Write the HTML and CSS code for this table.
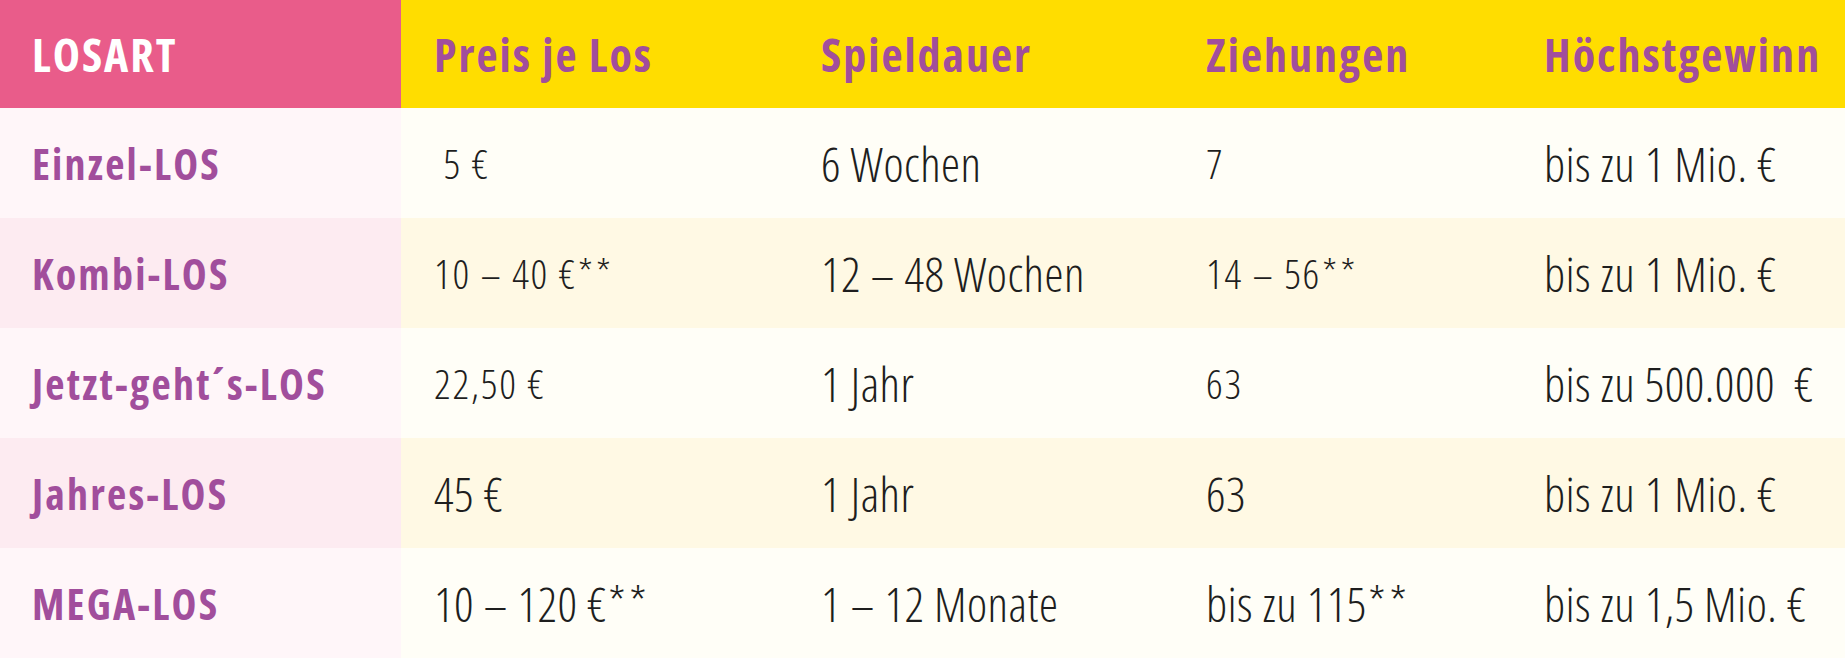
FILE: index.html
```html
<!DOCTYPE html>
<html lang="de">
<head>
<meta charset="utf-8">
<title>Losarten</title>
<link rel="stylesheet" href="styles.css">
</head>
<body>
<table class="lose">
  <colgroup>
    <col class="c1"><col class="c2"><col class="c3"><col class="c4"><col class="c5">
  </colgroup>
  <thead>
    <tr>
      <th class="head-pink">LOSART</th>
      <th>Preis je Los</th>
      <th>Spieldauer</th>
      <th>Ziehungen</th>
      <th>Höchstgewinn</th>
    </tr>
  </thead>
  <tbody>
    <tr class="odd">
      <td class="name">Einzel-LOS</td>
      <td class="sm">&nbsp;5 €</td>
      <td>6 Wochen</td>
      <td class="sm">7</td>
      <td>bis zu 1 Mio. €</td>
    </tr>
    <tr class="even">
      <td class="name">Kombi-LOS</td>
      <td class="sm">10 – 40 €<span class="ast">**</span></td>
      <td>12 – 48 Wochen</td>
      <td class="sm">14 – 56<span class="ast">**</span></td>
      <td>bis zu 1 Mio. €</td>
    </tr>
    <tr class="odd">
      <td class="name">Jetzt-geht´s-LOS</td>
      <td class="sm">22,50 €</td>
      <td>1 Jahr</td>
      <td class="sm">63</td>
      <td>bis zu 500.000&nbsp; €</td>
    </tr>
    <tr class="even">
      <td class="name">Jahres-LOS</td>
      <td>45 €</td>
      <td>1 Jahr</td>
      <td>63</td>
      <td>bis zu 1 Mio. €</td>
    </tr>
    <tr class="odd">
      <td class="name">MEGA-LOS</td>
      <td>10 – 120 €<span class="ast">**</span></td>
      <td>1 – 12 Monate</td>
      <td>bis zu 115<span class="ast">**</span></td>
      <td>bis zu 1,5 Mio. €</td>
    </tr>
  </tbody>
</table>
</body>
</html>
```
FILE: styles.css
```css
html, body {
  margin: 0;
  padding: 0;
  background: #ffffff;
}
.lose {
  width: 1845px;
  border-collapse: collapse;
  table-layout: fixed;
  font-family: "Open Sans", "DejaVu Sans", sans-serif;
  font-stretch: 75%;
}
.c1 { width: 401px; }
.c2 { width: 387px; }
.c3 { width: 385px; }
.c4 { width: 338px; }
.lose th, .lose td {
  padding: 0 0 0 33px;
  text-align: left;
  white-space: nowrap;
  overflow: hidden;
}
.lose th {
  height: 108px;
  background: #ffdd00;
  color: #a14e9c;
  font-weight: 700;
  font-size: 46px;
  letter-spacing: 2px;
}
.lose th.head-pink {
  background: #e95c8a;
  color: #ffffff;
  padding-left: 32px;
}
.lose td {
  height: 110px;
  color: #1e1e1e;
  font-size: 48px;
  font-weight: 300;
  letter-spacing: 0.5px;
}
.lose td.sm {
  font-size: 41px;
  letter-spacing: 1.8px;
}
.ast {
  letter-spacing: 0.08em;
  margin-left: 0.03em;
}
.lose td.name {
  color: #a14e9c;
  font-weight: 700;
  font-size: 42px;
  letter-spacing: 2.2px;
  padding-left: 32px;
}
.odd td { background: #fffef7; }
.even td { background: #fff9e4; }
.odd td.name { background: #fff6f9; }
.even td.name { background: #fdebf1; }
```
